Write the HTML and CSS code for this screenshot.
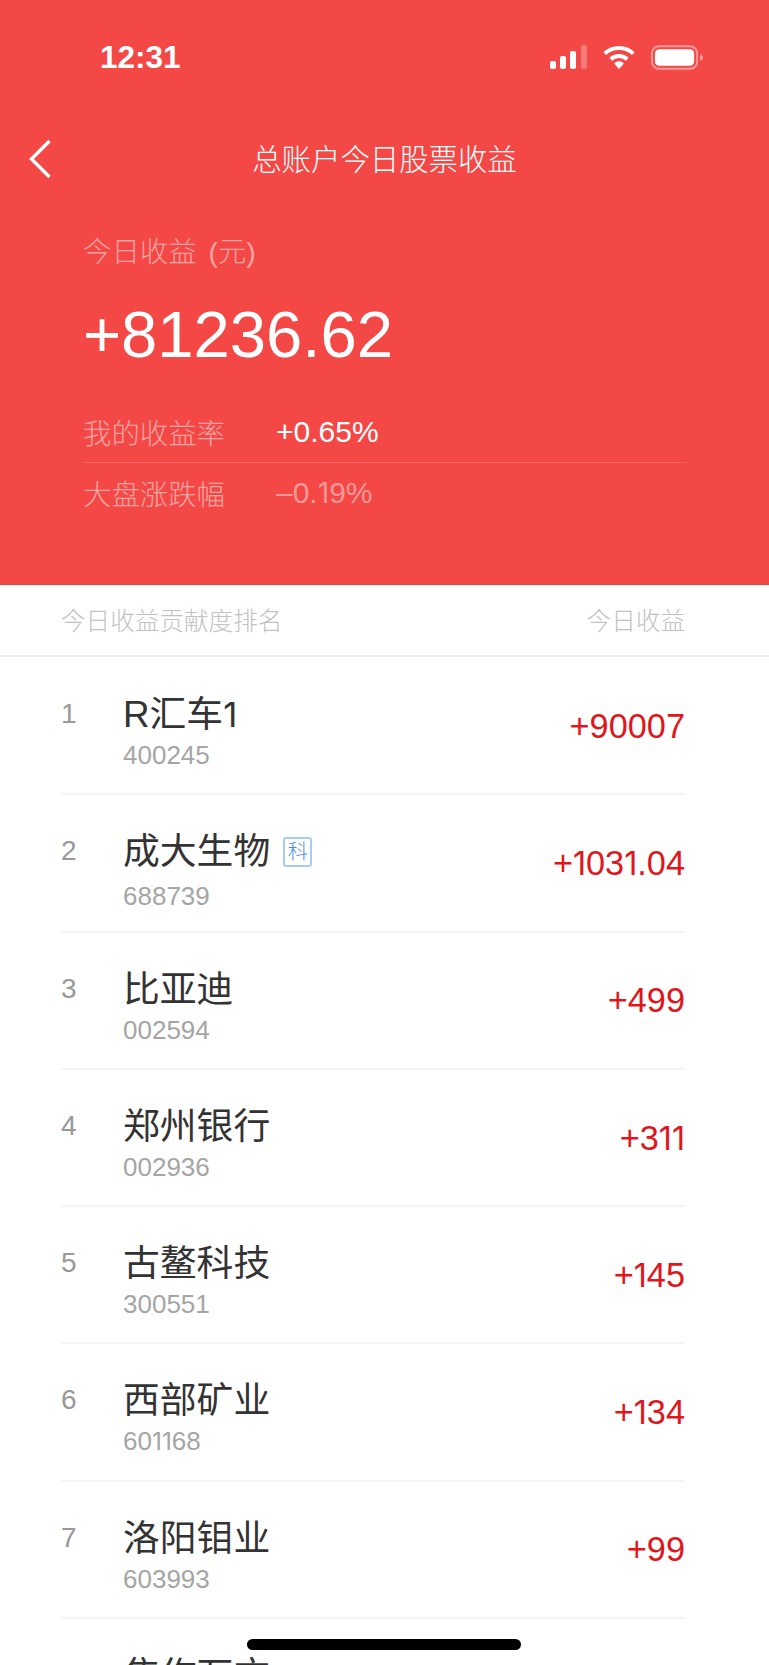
FILE: index.html
```html
<!DOCTYPE html>
<html lang="zh-CN">
<head>
<meta charset="utf-8">
<title>总账户今日股票收益</title>
<link rel="stylesheet" href="styles.css">
</head>
<body>
<main class="page">
  <header class="hero">
    <div class="status">
      <span class="time">12:31</span>
      <div class="status-icons">
        <svg class="ic-signal" viewBox="0 0 37 24" width="37" height="24">
          <rect x="0" y="16" width="6" height="8" rx="2" fill="#fff"/>
          <rect x="10" y="11" width="6" height="13" rx="2" fill="#fff"/>
          <rect x="20" y="6" width="6" height="18" rx="2" fill="#fff"/>
          <rect x="31" y="0" width="6" height="24" rx="2" fill="#fff" fill-opacity=".28"/>
        </svg>
        <svg class="ic-wifi" viewBox="0 0 33 24" width="34" height="24">
          <path d="M2.2 8.6 C10 1.2 23 1.2 30.8 8.6" fill="none" stroke="#fff" stroke-width="4"/>
          <path d="M8.2 14.2 C13 10 20 10 24.8 14.2" fill="none" stroke="#fff" stroke-width="4"/>
          <path d="M11.6 18.4 C14.6 15.6 18.4 15.6 21.4 18.4 L16.5 24 Z" fill="#fff"/>
        </svg>
        <svg class="ic-battery" viewBox="0 0 53 25" width="52" height="25">
          <rect x="1" y="1" width="46" height="23" rx="7" fill="none" stroke="#fff" stroke-opacity=".45" stroke-width="2"/>
          <rect x="4" y="4" width="40" height="17" rx="4.5" fill="#fff"/>
          <path d="M50 9 C52 10 53 11 53 12.5 C53 14 52 15 50 16 Z" fill="#fff" fill-opacity=".45"/>
        </svg>
      </div>
    </div>
    <nav class="nav">
      <svg class="back" viewBox="0 0 24 40" width="24" height="40"><path d="M21.5 2 L3.5 20 L21.5 38" fill="none" stroke="#fff" stroke-width="3.4"/></svg>
      <h1 class="nav-title">总账户今日股票收益</h1>
    </nav>
    <section class="summary">
      <div class="summary-label">今日收益 (元)</div>
      <div class="summary-amount">+81236.62</div>
      <div class="stat stat-first"><span class="stat-label">我的收益率</span><span class="stat-value">+0.65%</span></div>
      <div class="stat"><span class="stat-label">大盘涨跌幅</span><span class="stat-value stat-dim">–0.<i class="n1">1</i>9%</span></div>
    </section>
  </header>

  <div class="list-head"><span>今日收益贡献度排名</span><span>今日收益</span></div>

  <ol class="list">
    <li class="row"><span class="rank">1</span><div class="info"><div class="name"><span>R汇车<i class="n1">1</i></span></div><div class="code">400245</div></div><span class="gain">+90007</span></li>
    <li class="row"><span class="rank">2</span><div class="info"><div class="name name-tagged"><span>成大生物</span><span class="tag">科</span></div><div class="code">688739</div></div><span class="gain">+<i class="n1">1</i>03<i class="n1">1</i>.04</span></li>
    <li class="row"><span class="rank">3</span><div class="info"><div class="name">比亚迪</div><div class="code">002594</div></div><span class="gain">+499</span></li>
    <li class="row"><span class="rank">4</span><div class="info"><div class="name">郑州银行</div><div class="code">002936</div></div><span class="gain">+3<i class="n1">1</i><i class="n1">1</i></span></li>
    <li class="row"><span class="rank">5</span><div class="info"><div class="name">古鳌科技</div><div class="code">300551</div></div><span class="gain">+<i class="n1">1</i>45</span></li>
    <li class="row"><span class="rank">6</span><div class="info"><div class="name">西部矿业</div><div class="code">60<i class="n1">1</i><i class="n1">1</i>68</div></div><span class="gain">+<i class="n1">1</i>34</span></li>
    <li class="row"><span class="rank">7</span><div class="info"><div class="name">洛阳钼业</div><div class="code">603993</div></div><span class="gain">+99</span></li>
    <li class="row"><span class="rank">8</span><div class="info"><div class="name">焦作万方</div><div class="code">000612</div></div><span class="gain">+88</span></li>
  </ol>
  <div class="home-bar"></div>
</main>
</body>
</html>
```
FILE: styles.css
```css
* { box-sizing: border-box; margin: 0; padding: 0; }
html, body { background: #fff; }
body { font-family: "Liberation Sans", "Noto Sans CJK SC", sans-serif; font-weight: 300; }
.page { position: relative; width: 769px; height: 1665px; overflow: hidden; }
.n1 { font-family: Inter, "Liberation Sans", sans-serif; font-style: normal; font-size: .94em; font-weight: 400; line-height: 0; }

.hero { background: #f34845; height: 585px; color: #fff; }
.status { display: flex; justify-content: space-between; align-items: center; height: 42px; padding: 0 66px 0 100px; position: relative; top: 36px; }
.time { font-size: 31.5px; font-weight: 700; line-height: 42px; }
.status-icons { display: flex; align-items: center; gap: 15px; }
.status-icons svg { display: block; }

.nav { display: flex; align-items: center; justify-content: center; height: 76px; margin-top: 79px; position: relative; }
.back { position: absolute; left: 28px; top: 18px; }
.nav-title { font-size: 29.4px; font-weight: 300; line-height: 40px; padding-top: 2px; }

.summary { padding: 35px 83px 0; }
.summary-label { font-size: 28.4px; line-height: 40px; word-spacing: 4px; color: rgba(255,255,255,.5); }
.summary-amount { font-size: 65.2px; line-height: 80px; margin-top: 23px; }
.stat { display: flex; align-items: center; height: 60px; }
.stat-first { margin-top: 27px; border-bottom: 1px solid rgba(255,255,255,.16); height: 61px; }
.stat-label { width: 193px; padding-bottom: 2px; font-size: 28.4px; color: rgba(255,255,255,.5); }
.stat-value { font-size: 30px; }
.stat-dim { color: rgba(255,255,255,.45); }

.list-head { display: flex; justify-content: space-between; align-items: center; height: 72px; padding: 0 84px 3px 61px; border-bottom: 2px solid #eeeeee; font-size: 24.6px; color: #c2c2c2; }

.list { list-style: none; margin: 0 84px 0 61px; padding-top: 1px; }
.row { display: flex; align-items: center; height: 137.3px; border-bottom: 2px solid #f5f5f5; }
.rank { width: 62px; align-self: flex-start; padding-top: 40px; line-height: 32px; font-size: 28px; color: #999; }
.info { flex: 1; align-self: flex-start; padding-top: 34px; }
.name { display: flex; align-items: center; white-space: nowrap; font-size: 36.8px; line-height: 46px; color: #333; font-weight: 400; }
.name-tagged { margin-bottom: 6px; }
.tag { display: flex; align-items: center; justify-content: center; width: 29px; height: 30px; margin-left: 13px; border: 2px solid #a8cbf2; border-radius: 3px; font-size: 20px; font-weight: 300; color: #4a90e2; }
.code { font-size: 26px; line-height: 30px; margin-top: 2px; color: #a5a5a5; }
.name-tagged + .code { margin-top: 0; }
.gain { font-size: 34.3px; line-height: 40px; color: #e0161c; }

.home-bar { position: absolute; left: 247px; top: 1639px; width: 274px; height: 11px; border-radius: 6px; background: #000; }
```
